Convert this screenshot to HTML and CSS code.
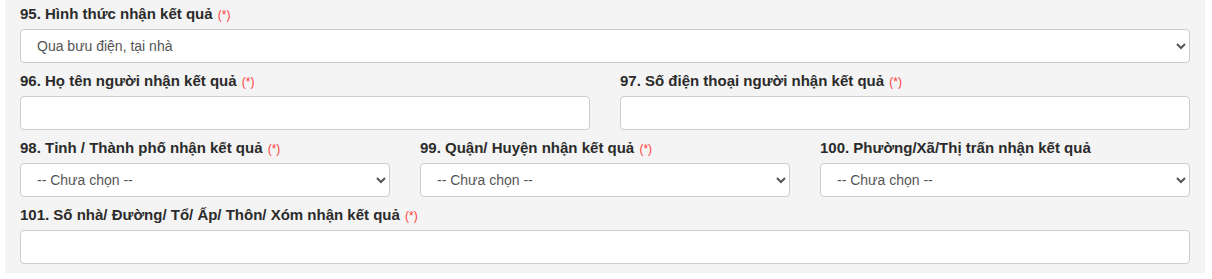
FILE: index.html
```html
<!DOCTYPE html>
<html lang="vi">
<head>
    <meta charset="UTF-8">
    <title>Thông tin nhận kết quả</title>
    <link rel="stylesheet" href="styles.css">
</head>
<body>
    <div class="form-panel">
        <div class="form-group">
            <label class="form-label">95. Hình thức nhận kết quả <span class="required">(*)</span></label>
            <select class="form-control">
                <option>Qua bưu điện, tại nhà</option>
                <option>Trực tiếp tại cơ quan</option>
            </select>
        </div>

        <div class="form-row cols-2">
            <div class="form-group">
                <label class="form-label">96. Họ tên người nhận kết quả <span class="required">(*)</span></label>
                <input type="text" class="form-control">
            </div>
            <div class="form-group">
                <label class="form-label">97. Số điện thoại người nhận kết quả <span class="required">(*)</span></label>
                <input type="tel" class="form-control">
            </div>
        </div>

        <div class="form-row cols-3">
            <div class="form-group">
                <label class="form-label">98. Tỉnh / Thành phố nhận kết quả <span class="required">(*)</span></label>
                <select class="form-control">
                    <option>-- Chưa chọn --</option>
                </select>
            </div>
            <div class="form-group">
                <label class="form-label">99. Quận/ Huyện nhận kết quả <span class="required">(*)</span></label>
                <select class="form-control">
                    <option>-- Chưa chọn --</option>
                </select>
            </div>
            <div class="form-group">
                <label class="form-label">100. Phường/Xã/Thị trấn nhận kết quả</label>
                <select class="form-control">
                    <option>-- Chưa chọn --</option>
                </select>
            </div>
        </div>

        <div class="form-group">
            <label class="form-label">101. Số nhà/ Đường/ Tổ/ Ấp/ Thôn/ Xóm nhận kết quả <span class="required">(*)</span></label>
            <input type="text" class="form-control">
        </div>
    </div>
</body>
</html>
```

FILE: styles.css
```css
body {
    font-family: Arial, 'Liberation Sans', sans-serif;
    background-color: white;
    color: #333;
    margin: 0;
    padding: 0 7px 7px 5px;
}

.form-panel {
    background-color: #f4f4f4;
    padding: 4px 15px 1px 15px;
}

.form-group {
    display: flex;
    flex-direction: column;
    margin-bottom: 8px;
}

.form-row {
    display: grid;
    column-gap: 30px;
}

.cols-2 {
    grid-template-columns: 1fr 1fr;
}

.cols-3 {
    grid-template-columns: 1fr 1fr 1fr;
}

.form-label {
    display: block;
    height: 20px;
    font-size: 15px;
    font-weight: bold;
    line-height: 20px;
    margin-bottom: 5px;
    color: #2b2b2b;
    white-space: nowrap;
}

.required {
    margin-left: 1px;
    font-weight: normal;
    font-size: 12px;
    line-height: 1;
    color: #ff3b3b;
}

.form-control {
    box-sizing: border-box;
    width: 100%;
    height: 34px;
    margin: 0;
    padding: 6px 12px;
    font-family: Arial, 'Liberation Sans', sans-serif;
    font-size: 14px;
    color: #555;
    background-color: white;
    border: 1px solid #ccc;
    border-radius: 4px;
}
```
